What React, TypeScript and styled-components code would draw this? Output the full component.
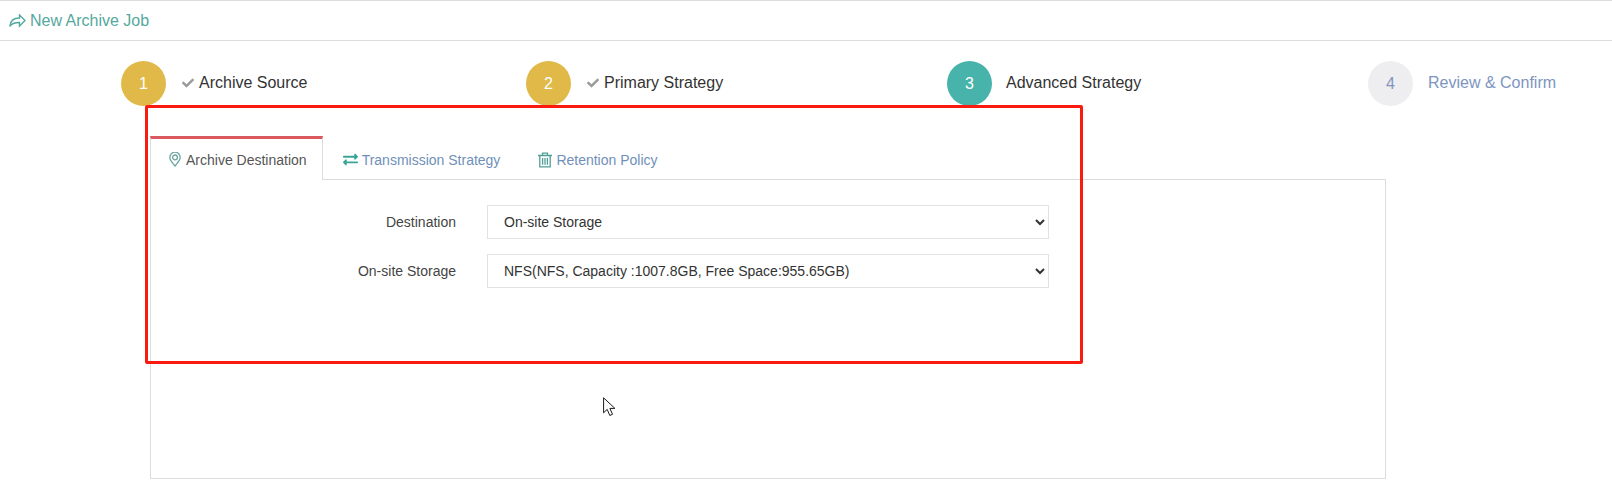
import styled, { createGlobalStyle } from 'styled-components'
import { FaCheck, FaExchangeAlt } from 'react-icons/fa'

const GlobalStyle = createGlobalStyle`
    html, body {
        margin: 0;
        background: #fff;
        font-family: "Liberation Sans", Arial, sans-serif;
    }
`

const steps = [
    { num: 1, label: 'Archive Source', state: 'done' },
    { num: 2, label: 'Primary Strategy', state: 'done' },
    { num: 3, label: 'Advanced Strategy', state: 'active' },
    { num: 4, label: 'Review & Confirm', state: 'todo' },
] as const

const PinIcon = () => (
    <svg width="12" height="15" viewBox="0 0 12 15" fill="none" stroke="#6fa5a0" strokeWidth="1.3">
        <path d="M6 14C3.800 11 .8 8.200.8 5.400a5.200 5.200 0 0 1 10.400 0C11.200 8.200 8.200 11 6 14z" />
        <circle cx="6" cy="5.400" r="2.400" />
    </svg>
)

const TrashIcon = () => (
    <svg width="14" height="16" viewBox="0 0 14 16" fill="none" stroke="#4f9f98" strokeWidth="1.300">
        <path d="M0 3.500h14M4.500 3.500V1.200h5v2.300M1.800 3.500v11.300h10.400V3.500M4.600 6v6.800M7 6v6.800M9.400 6v6.800" />
    </svg>
)

const ShareIcon = () => (
    <svg width="17" height="14" viewBox="0 0 17 14" fill="none" stroke="#55a89d" strokeWidth="1.400">
        <path d="M10.500 1v3C5 4 1.200 6.500.8 12.500 2.500 9.500 5.500 8.500 10.500 8.500v3.500L16 6.500z" />
    </svg>
)

const CursorIcon = () => (
    <svg width="13" height="20" viewBox="0 0 13 20" fill="#fff" stroke="#1a1a1a" strokeWidth="1">
        <path d="M.6.8v15l3.600-3.400 2.600 6.100 2.700-1.200-2.600-5.900h5z" />
    </svg>
)

export default function App() {
    return (
        <Page>
            <GlobalStyle />
            <Header>
                <ShareIcon />
                <HeaderTitle>New Archive Job</HeaderTitle>
            </Header>

            <Stepper>
                {steps.map((s) => (
                    <Step key={s.num}>
                        <StepCircle $state={s.state}>{s.num}</StepCircle>
                        <StepLabel $state={s.state}>
                            {s.state === 'done' && <FaCheck size={12} color="#9a9a9a" />}
                            {s.label}
                        </StepLabel>
                    </Step>
                ))}
            </Stepper>

            <TabsArea>
                <Tabs>
                    <Tab $active>
                        <PinIcon />
                        Archive Destination
                    </Tab>
                    <Tab>
                        <FaExchangeAlt size={15} color="#3aa597" />
                        Transmission Strategy
                    </Tab>
                    <Tab>
                        <TrashIcon />
                        Retention Policy
                    </Tab>
                </Tabs>
                <Panel>
                    <FormRow>
                        <FieldLabel>Destination</FieldLabel>
                        <Select defaultValue="onsite">
                            <option value="onsite">On-site Storage</option>
                        </Select>
                    </FormRow>
                    <FormRow>
                        <FieldLabel>On-site Storage</FieldLabel>
                        <Select defaultValue="nfs">
                            <option value="nfs">NFS(NFS, Capacity :1007.8GB, Free Space:955.65GB)</option>
                        </Select>
                    </FormRow>
                </Panel>
            </TabsArea>

            <Highlight />
            <Cursor>
                <CursorIcon />
            </Cursor>
        </Page>
    )
}

const Page = styled.div`
    position: relative;
    width: 1612px;
    height: 489px;
    overflow: hidden;
    background: #fff;
`

const Header = styled.div`
    display: flex;
    align-items: center;
    gap: 4px;
    height: 41px;
    padding-left: 9px;
    box-sizing: border-box;
    border-top: 1px solid #dcdcdc;
    border-bottom: 1px solid #dcdcdc;
`

const HeaderTitle = styled.span`
    font-size: 16px;
    color: #55a89d;
`

const Stepper = styled.div`
    display: grid;
    grid-template-columns: 405px 421px 421px auto;
    padding: 20px 0 0 121px;
`

const Step = styled.div`
    display: flex;
    align-items: center;
    height: 45px;
`

const circleColors = {
    done: '#e0b948',
    active: '#47b3aa',
    todo: '#eeeef0',
}

const labelMargins = {
    done: '16px',
    active: '14px',
    todo: '15px',
}

const StepCircle = styled.div<{ $state: keyof typeof circleColors }>`
    display: flex;
    align-items: center;
    justify-content: center;
    width: 45px;
    height: 45px;
    border-radius: 50%;
    font-size: 16px;
    background: ${(p) => circleColors[p.$state]};
    color: ${(p) => (p.$state === 'todo' ? '#7d95c0' : '#fff')};
`

const StepLabel = styled.div<{ $state: keyof typeof circleColors }>`
    display: flex;
    align-items: center;
    gap: 5px;
    margin-left: ${(p) => labelMargins[p.$state]};
    padding-bottom: 2px;
    font-size: 16px;
    color: ${(p) => (p.$state === 'todo' ? '#7d95c0' : '#333')};
`

const TabsArea = styled.div`
    margin: 30px 0 0 150px;
    width: 1236px;
`

const Tabs = styled.div`
    display: flex;
    height: 44px;
    position: relative;
    z-index: 1;
    margin-bottom: -1px;
`

const Tab = styled.div<{ $active?: boolean }>`
    display: flex;
    align-items: center;
    gap: ${(p) => (p.$active ? '5px' : '4px')};
    box-sizing: border-box;
    padding: ${(p) => (p.$active ? '0 15px 0 18px' : '0 17px 0 19px')};
    font-size: 14px;
    color: ${(p) => (p.$active ? '#555' : '#6f90ba')};
    background: ${(p) => (p.$active ? '#fff' : 'transparent')};
    border-top: 3px solid ${(p) => (p.$active ? '#d9595f' : 'transparent')};
    border-left: 1px solid ${(p) => (p.$active ? '#dcdcdc' : 'transparent')};
    border-right: 1px solid ${(p) => (p.$active ? '#dcdcdc' : 'transparent')};
`

const Panel = styled.div`
    box-sizing: border-box;
    height: 300px;
    padding-top: 25px;
    border: 1px solid #dcdcdc;
    display: flex;
    flex-direction: column;
    gap: 15px;
`

const FormRow = styled.div`
    display: flex;
    align-items: center;
`

const FieldLabel = styled.label`
    width: 305px;
    text-align: right;
    font-size: 14px;
    color: #444;
`

const Select = styled.select`
    margin-left: 31px;
    width: 562px;
    height: 34px;
    padding: 0 12px;
    font-family: inherit;
    font-size: 14px;
    color: #333;
    background: #fff;
    border: 1px solid #e2e2e2;
    border-radius: 0;
    outline: none;
`

const Highlight = styled.div`
    position: absolute;
    left: 145px;
    top: 105px;
    width: 938px;
    height: 259px;
    box-sizing: border-box;
    border: 3px solid #fb1a10;
    border-radius: 2px;
    pointer-events: none;
`

const Cursor = styled.div`
    position: absolute;
    left: 603px;
    top: 397px;
    line-height: 0;
`
